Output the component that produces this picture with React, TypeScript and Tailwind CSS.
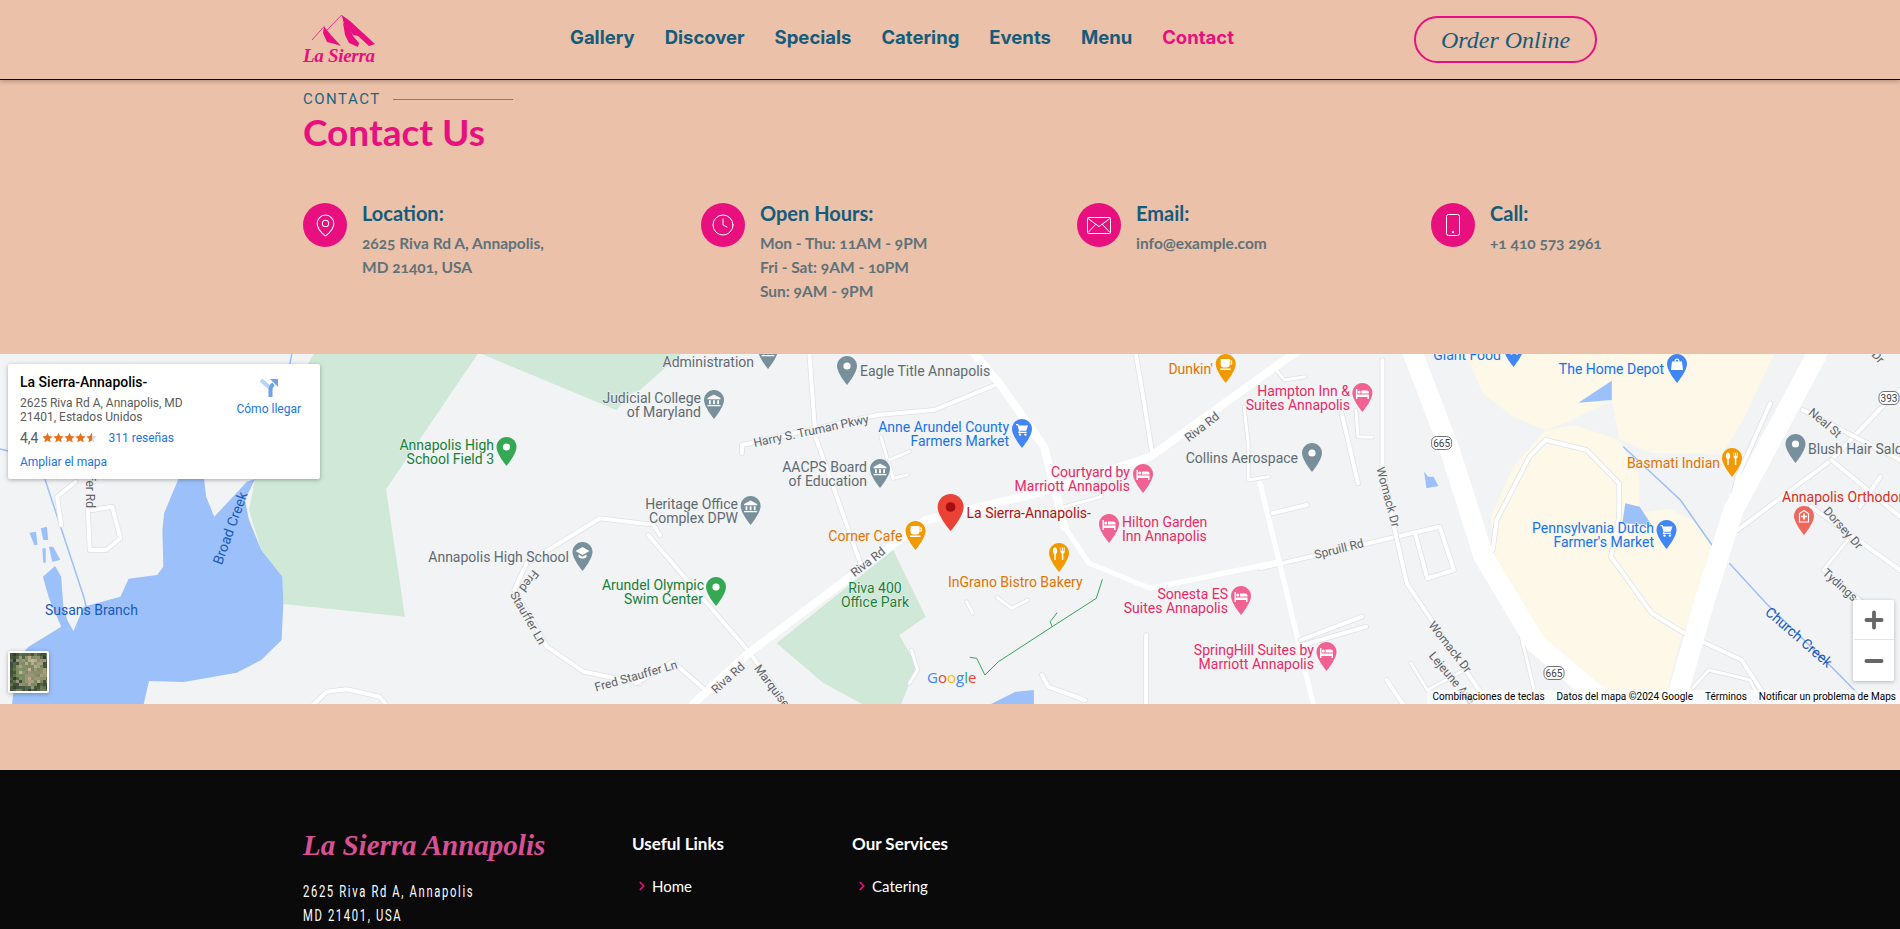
import { ChevronRight, Clock, MapPin, Minus, Plus } from "lucide-react";

const NAV = ["Gallery", "Discover", "Specials", "Catering", "Events", "Menu", "Contact"];

function MailIcon() {
  return (
    <svg width="24" height="17" viewBox="0 0 24 17" fill="none" stroke="#ffffff" strokeWidth="1">
      <rect x="0.500" y="0.500" width="23" height="16" rx="1" />
      <path d="M1 1.500l11 8 11-8M1 15.500l8-8.500M23 15.500l-8-8.500" />
    </svg>
  );
}

function PhoneIcon() {
  return (
    <svg width="14" height="22" viewBox="0 0 14 22" fill="none" stroke="#ffffff" strokeWidth="1">
      <rect x="0.500" y="0.500" width="13" height="21" rx="2" />
      <circle cx="7" cy="18" r="0.800" fill="#ffffff" />
    </svg>
  );
}

const INFO = [
  { title: "Location:", icon: <MapPin size={25} strokeWidth={1} color="#ffffff" />, w: "w-[241px]", lines: ["2625 Riva Rd A, Annapolis,", "MD 21401, USA"] },
  { title: "Open Hours:", icon: <Clock size={24} strokeWidth={1} color="#ffffff" />, w: "w-[219px]", lines: ["Mon - Thu: 11AM - 9PM", "Fri - Sat: 9AM - 10PM", "Sun: 9AM - 9PM"] },
  { title: "Email:", icon: <MailIcon />, w: "w-[197px]", lines: ["info@example.com"] },
  { title: "Call:", icon: <PhoneIcon />, w: "w-[166px]", lines: ["+1 410 573 2961"] },
];

// map points are read off crops that start at y=350, 2.45 crop px per page px across and 3 down
const pts = (x0: number, s: string) =>
  s
    .split(" ")
    .map((p) => {
      const [x, y] = p.split(",").map(Number);
      return `${(x0 + x / 2.45).toFixed(1)},${(350 + y / 3).toFixed(1)}`;
    })
    .join(" ");

const PARKS: [number, string][] = [
  [0, "768,12 1170,12 946,418 992,800 694,762 692,680 640,600 610,480 625,387 640,300"],
  [0, "1180,12 1568,12 1568,100 1510,180"],
  [640, "-60,12 100,12 0,120 -60,150"],
  [640, "620,600 700,800 635,855 680,950 660,1000 640,1062 545,1062 450,1000 335,880"],
];

const SAND: [number, string][] = [
  [1260, "505,12 545,130 620,200 700,240 750,218 862,150 880,268 960,310 1130,312 1180,220 1260,12"],
  [1260, "700,240 770,225 880,270 930,380 930,490 1000,475 1060,510 1110,590 1050,815 1030,870 990,1062 830,1040 680,870 580,640 565,500 620,350"],
];

const WATER: [number, string][] = [
  [0, "437,387 402,490 398,540 400,650 385,675 315,686 295,740 205,770 180,843 165,810 155,770 150,680 135,648 105,680 120,745 150,830 70,890 40,930 30,1062 352,1062 365,993 450,996 580,968 640,930 690,870 694,762 692,680 640,600 610,510 600,450 625,387 605,395 525,500 505,440 500,387"],
  [0, "72,548 88,545 92,585 84,585"],
  [0, "100,535 115,530 118,570 106,570"],
  [0, "104,595 112,595 112,638 106,638"],
  [0, "120,590 130,590 148,630 128,635"],
  [640, "860,1062 920,1025 965,1020 965,1062"],
  [1260, "780,158 862,92 862,150"],
  [1260, "402,365 408,415 437,408 425,380 412,380"],
  [1260, "895,460 888,520 960,525 930,470"],
];

const STREAMS: [number, string][] = [
  [0, "110,387 205,740 215,790"],
  [0, "0,297 20,303"],
  [0, "715,12 710,42"],
  [1260, "890,290 1030,450 1110,590"],
  [1260, "1150,640 1240,760 1400,950 1480,1050"],
];

const ROADS: [number, string, number][] = [
  // small streets first so the big roads run over them
  [1260, "0,655 440,530 475,660 410,685 380,550", 4],
  [640, "250,310 250,285 580,195 720,180 880,100", 4],
  [640, "415,12 430,260 540,640", 4],
  [640, "1215,12 1230,120 1255,310", 4],
  [640, "20,555 270,910 360,1062", 4],
  [0, "1290,640 1470,505 1568,520 1600,523 1617,555", 4],
  [0, "1290,640 1260,720 1340,890 1430,965 1568,1000", 4],
  [640, "-10,1000 80,935 165,1025", 4],
  [0, "770,1062 800,1025 850,1018 930,1040 945,1062", 4],
  [0, "185,395 140,440 150,525", 4],
  [0, "215,480 220,600 260,600 295,565 275,470 225,480", 4],
  [640, "985,975 1000,1010 1090,1050", 4],
  [640, "1240,855 1240,1062", 4],
  [640, "665,900 680,960 660,1000", 3],
  [640, "800,755 815,790", 3],
  [640, "875,742 910,775 950,750", 3],
  [640, "590,260 620,385 655,375", 3],
  [640, "610,330 660,305", 3],
  [640, "1040,470 1130,440 1130,380", 3],
  [640, "1480,170 1490,280 1490,390 1540,380", 3],
  [1260, "200,190 240,400", 4],
  [1260, "0,400 60,700 130,1062", 5],
  [1260, "30,490 115,465", 4],
  [1260, "300,30 300,350 330,540 360,700 420,810 560,1062", 4],
  [1260, "310,990 350,1062", 4],
  [1260, "370,940 410,1020 500,960", 3],
  [1260, "100,870 250,800", 4],
  [1260, "105,885 260,830", 4],
  [1260, "40,60 60,90 110,80", 3],
  [1260, "235,180 240,260 275,262", 3],
  [1260, "570,600 580,510 660,320 700,270 800,300 880,400 880,500 860,620 960,790 1040,850 1180,930 1250,1062", 4],
  [1260, "640,860 680,1062", 3],
  [1260, "1040,1040 1100,960 1200,990 1230,1062", 3],
  [1260, "1250,160 1170,380 1160,430", 4],
  [1260, "1170,540 1400,330 1540,150 1568,120", 4],
  [1260, "1330,180 1568,330", 4],
  [1260, "1400,330 1568,500", 4],
  [1260, "1520,380 1470,470", 4],
  [1260, "1350,470 1568,660", 4],
  [1260, "1440,570 1380,660 1480,760", 3],
  // the same road thins out once it turns into Spruill Rd
  [640, "1040,530 1100,640 1250,715 1568,635", 5],
  // highways and the big roads
  [640, "820,12 880,100 990,290 1040,530", 8],
  [640, "130,1062 265,910 700,510 980,428 1250,320 1568,40 1640,-20", 8],
  [1260, "375,12 465,300 548,620 675,880 810,1020 870,1070", 20],
  [1260, "1365,12 1160,480 1090,750 1015,1070", 20],
];

type Pin = { x: number; top: number; color: string; kind: string };

const SLATE = "#78909c";
const ORANGE = "#f29900";
const ROSE = "#f06292";
const BLUE = "#4285f4";

const PINS: Pin[] = [
  { x: 506.5, top: 437, color: "#34a853", kind: "dot" },
  { x: 582.5, top: 542, color: SLATE, kind: "cap" },
  { x: 714, top: 390, color: SLATE, kind: "bank" },
  { x: 768, top: 340, color: SLATE, kind: "bank" },
  { x: 847, top: 356, color: SLATE, kind: "dot" },
  { x: 1022, top: 419, color: BLUE, kind: "cart" },
  { x: 880, top: 459, color: SLATE, kind: "bank" },
  { x: 750.6, top: 496, color: SLATE, kind: "bank" },
  { x: 915.5, top: 521, color: ORANGE, kind: "cup" },
  { x: 716, top: 577, color: "#34a853", kind: "dot" },
  { x: 1059, top: 543, color: ORANGE, kind: "fork" },
  { x: 1225.7, top: 354, color: ORANGE, kind: "cup" },
  { x: 1143, top: 464, color: ROSE, kind: "bed" },
  { x: 1109, top: 514, color: ROSE, kind: "bed" },
  { x: 1241, top: 586, color: ROSE, kind: "bed" },
  { x: 1326.5, top: 642, color: ROSE, kind: "bed" },
  { x: 1362.4, top: 383, color: ROSE, kind: "bed" },
  { x: 1312, top: 443, color: SLATE, kind: "dot" },
  { x: 1513.5, top: 338, color: BLUE, kind: "cart" },
  { x: 1677, top: 354, color: BLUE, kind: "bag" },
  { x: 1732, top: 448, color: ORANGE, kind: "fork" },
  { x: 1795.5, top: 434, color: SLATE, kind: "dot" },
  { x: 1804, top: 506, color: "#ee675c", kind: "plus" },
  { x: 1666.5, top: 520, color: BLUE, kind: "cart" },
];

const GREEN = "#188038";
const GREY = "#5f6b73";
const AMBER = "#e37400";
const PINK = "#ea2a66";
const SKY = "#1a73e8";
const DEEP = "#185abc";

type Label = { t: string; x: number; cy: number; c: string; a?: "start" | "middle" | "end" };

const LABELS: Label[] = [
  { t: "Annapolis High", x: 494, cy: 445, c: GREEN, a: "end" },
  { t: "School Field 3", x: 494, cy: 459, c: GREEN, a: "end" },
  { t: "Annapolis High School", x: 569, cy: 557, c: GREY, a: "end" },
  { t: "Arundel Olympic", x: 704, cy: 585, c: GREEN, a: "end" },
  { t: "Swim Center", x: 703, cy: 599, c: GREEN, a: "end" },
  { t: "Judicial College", x: 701, cy: 398, c: GREY, a: "end" },
  { t: "of Maryland", x: 701, cy: 412, c: GREY, a: "end" },
  { t: "Administration", x: 754, cy: 362, c: GREY, a: "end" },
  { t: "Eagle Title Annapolis", x: 860, cy: 371, c: GREY },
  { t: "Anne Arundel County", x: 1009, cy: 427, c: SKY, a: "end" },
  { t: "Farmers Market", x: 1009, cy: 441, c: SKY, a: "end" },
  { t: "AACPS Board", x: 867, cy: 467, c: GREY, a: "end" },
  { t: "of Education", x: 867, cy: 481, c: GREY, a: "end" },
  { t: "Heritage Office", x: 738, cy: 504, c: GREY, a: "end" },
  { t: "Complex DPW", x: 738, cy: 518, c: GREY, a: "end" },
  { t: "Corner Cafe", x: 902.4, cy: 536, c: AMBER, a: "end" },
  { t: "La Sierra-Annapolis-", x: 966.5, cy: 513, c: "#b31412" },
  { t: "Riva 400", x: 875, cy: 588, c: GREEN, a: "middle" },
  { t: "Office Park", x: 875, cy: 602, c: GREEN, a: "middle" },
  { t: "InGrano Bistro Bakery", x: 948, cy: 582, c: AMBER },
  { t: "Dunkin'", x: 1213, cy: 369, c: AMBER, a: "end" },
  { t: "Courtyard by", x: 1130, cy: 472, c: PINK, a: "end" },
  { t: "Marriott Annapolis", x: 1130, cy: 486, c: PINK, a: "end" },
  { t: "Hilton Garden", x: 1122, cy: 522, c: PINK },
  { t: "Inn Annapolis", x: 1122, cy: 536, c: PINK },
  { t: "Sonesta ES", x: 1228, cy: 594, c: PINK, a: "end" },
  { t: "Suites Annapolis", x: 1228, cy: 608, c: PINK, a: "end" },
  { t: "SpringHill Suites by", x: 1314, cy: 650, c: PINK, a: "end" },
  { t: "Marriott Annapolis", x: 1314, cy: 664, c: PINK, a: "end" },
  { t: "Hampton Inn &", x: 1350, cy: 391, c: PINK, a: "end" },
  { t: "Suites Annapolis", x: 1350, cy: 405, c: PINK, a: "end" },
  { t: "Collins Aerospace", x: 1298, cy: 458, c: GREY, a: "end" },
  { t: "Giant Food", x: 1501, cy: 355, c: SKY, a: "end" },
  { t: "The Home Depot", x: 1664, cy: 369, c: SKY, a: "end" },
  { t: "Basmati Indian", x: 1720, cy: 463, c: AMBER, a: "end" },
  { t: "Blush Hair Salon", x: 1808, cy: 449, c: GREY },
  { t: "Annapolis Orthodontics", x: 1782, cy: 497, c: "#d93025" },
  { t: "Pennsylvania Dutch", x: 1654, cy: 528, c: SKY, a: "end" },
  { t: "Farmer's Market", x: 1654, cy: 542, c: SKY, a: "end" },
];

const STREETS: { t: string; x: number; y: number; r: number }[] = [
  { t: "Harry S. Truman Pkwy", x: 811, y: 431, r: -12 },
  { t: "Riva Rd", x: 868, y: 562, r: -38 },
  { t: "Riva Rd", x: 728, y: 678, r: -42 },
  { t: "Riva Rd", x: 1202, y: 427, r: -38 },
  { t: "Marquise", x: 772, y: 686, r: 53 },
  { t: "Fred Stauffer Ln", x: 636, y: 676, r: -16 },
  { t: "Fred", x: 529, y: 581, r: 128 },
  { t: "Stauffer Ln", x: 528, y: 618, r: 60 },
  { t: "Spruill Rd", x: 1339, y: 549, r: -14 },
  { t: "Womack Dr", x: 1388, y: 497, r: 75 },
  { t: "Womack Dr", x: 1450, y: 647, r: 52 },
  { t: "Lejeune Ave", x: 1452, y: 678, r: 50 },
  { t: "Neal St", x: 1825, y: 423, r: 40 },
  { t: "Dorsey Dr", x: 1843, y: 528, r: 48 },
  { t: "Tydings", x: 1840, y: 585, r: 42 },
  { t: "Dr", x: 1878, y: 357, r: 50 },
  { t: "Stauffer Rd", x: 90, y: 478, r: 90 },
];

const SHIELDS = [
  { t: "665", x: 1441.6, y: 443 },
  { t: "665", x: 1554, y: 673 },
  { t: "393", x: 1889, y: 398 },
];

const SAT_LIGHT = ["#a89f83", "#b5ab90", "#c0b59a", "#8c8f6c", "#7c8a5f", "#9a9478"];
const SAT_DARK = ["#46563a", "#3f5042", "#54654a", "#5f7048", "#6f7f52", "#2f3f34"];

// aerial speckle for the small satellite button: pale ground in the middle, dark trees round it
const SPECKLE = Array.from({ length: 13 * 13 }, (_, i) => {
  const x = (i % 13) * 3;
  const y = Math.floor(i / 13) * 3;
  const noise = Math.abs(Math.sin(i * 12.9898) * 43758.5453) % 1;
  const pale = Math.hypot(x - 20, y - 17) < 13 + noise * 6;
  const set = pale ? SAT_LIGHT : SAT_DARK;
  return { x, y, c: set[Math.floor(noise * set.length)] };
});

// the white glyph inside a map pin, drawn in the pin's own 20x29 box
function PinGlyph({ kind }: { kind: string }) {
  const white = "#fff";
  switch (kind) {
    case "dot":
      return <circle cx="10" cy="10" r="3.6" fill={white} />;
    case "cap":
      return <path d="M10 5l7 4-7 4-7-4zM6 12.5v2.5c2 2 6 2 8 0v-2.5l-4 2.2z" fill={white} />;
    case "bank":
      return <path d="M10 4.5l6.5 3.5v1.2h-13V8zM5 10.2h1.8v4H5zM9.1 10.2h1.8v4H9.1zM13.2 10.2H15v4h-1.8zM3.5 15h13v1.3h-13z" fill={white} />;
    case "cart":
      return (
        <>
          <path d="M4 5h2.2l.6 1.6H16l-1.8 5.2H8l-.4 1h7v1.2H6l1-2.4L5.4 6.2H4z" fill={white} />
          <circle cx="8" cy="15.6" r="1.2" fill={white} />
          <circle cx="13.4" cy="15.6" r="1.2" fill={white} />
        </>
      );
    case "cup":
      return <path d="M5 5h9v1.4h2.5v4.2H14c0 2-1.2 3-3 3H8c-2 0-3-1.2-3-3zM14 7.6v1.8h1.2V7.6zM4.5 14.6h10.5V16H4.5z" fill={white} />;
    case "fork":
      return <path d="M6 4.5c-1.6 0-2.2 2-2.2 3.5S4.6 11 5.3 11.2V17h1.500v-5.800C7.600 11 8.200 9.500 8.200 8S7.600 4.500 6 4.500zM11.500 4.500v4c0 1 .6 1.800 1.300 2V17h1.500v-6.500c.8-.2 1.400-1 1.400-2v-4h-1v3.500h-.8V4.500h-1V8h-.8V4.500z" fill={white} />;
    case "bed":
      return <path d="M3.500 6h1.400v5.400h11.600V16h-1.400v-2H4.900v2H3.500zM6.800 7.600a1.500 1.500 0 110 3 1.500 1.500 0 010-3zM9 7.500h5.500c1 0 2 .8 2 2v1H9z" fill={white} />;
    case "bag":
      return <path d="M5 7.500h10l1 8.500H4zM7.500 7.500V7a2.500 2.500 0 015 0v.5h-1.200V7a1.300 1.300 0 00-2.600 0v.5z" fill={white} />;
    case "plus":
      return (
        <>
          <path d="M5.500 16V7.500L10 4.500l4.500 3V16z" fill="none" stroke={white} strokeWidth="1.200" />
          <path d="M9.200 7.500h1.600v2.200H13v1.600h-2.200v2.200H9.200v-2.200H7V9.700h2.200z" fill={white} />
        </>
      );
    default:
      return null;
  }
}

function MapLayer() {
  return (
    <svg className="absolute inset-0 h-full w-full" viewBox="0 354 1900 350" style={{ fontFamily: "Roboto, sans-serif" }}>
      {PARKS.map(([x0, s], i) => (
        <polygon key={i} points={pts(x0, s)} fill="#cfe8d7" />
      ))}
      {SAND.map(([x0, s], i) => (
        <polygon key={i} points={pts(x0, s)} fill="#fdf8e7" />
      ))}
      {WATER.map(([x0, s], i) => (
        <polygon key={i} points={pts(x0, s)} fill="#9cc0f9" />
      ))}
      {STREAMS.map(([x0, s], i) => (
        <polyline key={i} points={pts(x0, s)} fill="none" stroke="#9cc0f9" strokeWidth="1.500" />
      ))}
      {ROADS.map(([x0, s, w], i) => (
        <g key={i} fill="none" strokeLinejoin="round" strokeLinecap="round">
          {w < 5 && <polyline points={pts(x0, s)} stroke="#dfe1e5" strokeWidth={w + 1.500} />}
          <polyline points={pts(x0, s)} stroke="#ffffff" strokeWidth={w} />
        </g>
      ))}
      <polyline points={pts(640, "1133,688 1118,745 1010,830 878,935 845,975 825,925 808,922")} fill="none" stroke="#34a853" strokeWidth="1" />
      <polyline points={pts(640, "1010,830 1005,815 1022,788")} fill="none" stroke="#34a853" strokeWidth="1" />

      {SHIELDS.map((s, i) => (
        <g key={i}>
          <rect x={s.x - 10} y={s.y - 6.500} width="20" height="13" rx="5" fill="#fff" stroke="#70757a" strokeWidth="1" />
          <text x={s.x} y={s.y + 3.500} textAnchor="middle" fontSize="10" fill="#3c4043">
            {s.t}
          </text>
        </g>
      ))}

      {STREETS.map((s, i) => (
        <text
          key={i}
          transform={`translate(${s.x} ${s.y}) rotate(${s.r})`}
          textAnchor="middle"
          dominantBaseline="central"
          fontSize="12"
          fill="#5f6368"
          stroke="#f1f3f4"
          strokeWidth="2"
          paintOrder="stroke"
        >
          {s.t}
        </text>
      ))}

      {/* water names sit straight on the blue, no halo */}
      <text x="45" y="615" fontSize="14" fill={DEEP}>
        Susans Branch
      </text>
      <text transform="translate(230 528) rotate(-70)" textAnchor="middle" dominantBaseline="central" fontSize="14" fill={DEEP}>
        Broad Creek
      </text>
      <text transform="translate(1799 637) rotate(41)" textAnchor="middle" dominantBaseline="central" fontSize="14" fill={DEEP}>
        Church Creek
      </text>

      {LABELS.map((l, i) => (
        <text key={i} x={l.x} y={l.cy + 5} textAnchor={l.a ?? "start"} fontSize="14" fill={l.c} stroke="#f1f3f4" strokeWidth="1" paintOrder="stroke">
          {l.t}
        </text>
      ))}

      {PINS.map((p, i) => (
        <g key={i} transform={`translate(${p.x - 10} ${p.top})`}>
          <path d="M10 0C4.500 0 0 4.500 0 10c0 7 10 19 10 19s10-12 10-19C20 4.500 15.500 0 10 0z" fill={p.color} />
          <PinGlyph kind={p.kind} />
        </g>
      ))}

      {/* the red marker of the restaurant */}
      <g transform="translate(937.600 494)">
        <path d="M13 0C5.800 0 0 5.800 0 13c0 9.500 13 24 13 24s13-14.500 13-24C26 5.800 20.200 0 13 0z" fill="#ea4335" />
        <circle cx="13" cy="13" r="4.800" fill="#a50e0e" />
      </g>

      <text x="927" y="683" fontSize="15" fontWeight="500" style={{ fontFamily: "'Open Sans', sans-serif" }}>
        <tspan fill="#4285f4">G</tspan>
        <tspan fill="#ea4335">o</tspan>
        <tspan fill="#fbbc04">o</tspan>
        <tspan fill="#4285f4">g</tspan>
        <tspan fill="#34a853">l</tspan>
        <tspan fill="#ea4335">e</tspan>
      </text>
    </svg>
  );
}

function Stars() {
  return (
    <svg width="56" height="12" viewBox="0 0 56 12">
      <defs>
        <linearGradient id="half">
          <stop offset="50%" stopColor="#e7711b" />
          <stop offset="50%" stopColor="#d9d9d9" />
        </linearGradient>
      </defs>
      {[0, 1, 2, 3, 4].map((i) => (
        <path
          key={i}
          transform={`translate(${i * 11} 0)`}
          d="M5.500 .7l1.500 3.400 3.700.4-2.800 2.400.8 3.600-3.200-1.900-3.200 1.900.8-3.600L.3 4.500 4 4.100z"
          fill={i === 4 ? "url(#half)" : "#e7711b"}
        />
      ))}
    </svg>
  );
}

function PlaceCard() {
  return (
    <div className="absolute left-2 top-[10px] flex h-[115px] w-[312px] justify-between rounded-[2px] bg-white px-3 pt-[9px] font-['Roboto',sans-serif] shadow-[0_1px_4px_rgba(0,0,0,0.3)]">
      <div>
        <div className="text-[14px] leading-[18px] font-medium text-black">La Sierra-Annapolis-</div>
        <div className="mt-[5px] w-[190px] text-[12px] leading-[14px] text-[#5b5b5b]">2625 Riva Rd A, Annapolis, MD 21401, Estados Unidos</div>
        <div className="mt-[5px] flex h-[18px] items-center text-[12px]">
          <span className="mr-[3px] text-[14px] text-[#5b5b5b]">4,4</span>
          <Stars />
          <span className="ml-[11px] text-[#1a73e8]">311 reseñas</span>
        </div>
        <div className="mt-[8px] text-[12px] leading-[14px] text-[#1a73e8]">Ampliar el mapa</div>
      </div>
      <div className="mr-[7px] flex flex-col items-center pt-[5px]">
        <svg width="20" height="20" viewBox="0 0 20 20">
          <path d="M2 2l9 8" stroke="#b8d3f5" strokeWidth="4" fill="none" />
          <path d="M11.500 19v-7c0-3 1-4.500 3-6" stroke="#6ea3ea" strokeWidth="4" fill="none" />
          <path d="M11 1h8v8z" fill="#6ea3ea" />
        </svg>
        <span className="mt-[3px] text-[12px] leading-[16px] text-[#1a73e8]">Cómo llegar</span>
      </div>
    </div>
  );
}

function MapSection() {
  return (
    <div className="relative h-[350px] overflow-hidden bg-[#f1f3f4]">
      <MapLayer />
      <PlaceCard />

      {/* satellite thumbnail */}
      <div className="absolute bottom-[11px] left-[8px] h-[42px] w-[41px] overflow-hidden rounded-[2px] border-2 border-white shadow-[0_1px_4px_rgba(0,0,0,0.3)]">
        <svg width="37" height="38" viewBox="0 0 37 38">
          {SPECKLE.map((s, i) => (
            <rect key={i} x={s.x} y={s.y} width="3" height="3" fill={s.c} />
          ))}
        </svg>
      </div>

      {/* zoom buttons */}
      <div className="absolute right-[6px] top-[246px] flex h-[81px] w-[41px] flex-col items-center rounded-[2px] bg-white shadow-[0_1px_4px_rgba(0,0,0,0.25)]">
        <div className="flex h-[40px] items-center justify-center border-b border-[#e6e6e6] px-[6px]">
          <Plus size={26} strokeWidth={3.500} color="#666666" className="mx-[1px]" />
        </div>
        <div className="flex h-[41px] items-center justify-center">
          <Minus size={26} strokeWidth={3.500} color="#666666" />
        </div>
      </div>

      {/* attribution strip */}
      <div className="absolute bottom-0 right-0 flex h-[14px] items-center gap-[12px] bg-white/60 pl-[5px] pr-[4px] font-['Roboto',sans-serif] text-[10px] leading-[14px] text-black">
        <span>Combinaciones de teclas</span>
        <span>Datos del mapa ©2024 Google</span>
        <span>Términos</span>
        <span>Notificar un problema de Maps</span>
      </div>
    </div>
  );
}

export default function App() {
  return (
    <div className="h-screen overflow-hidden bg-[#ebc1a9]">
      {/* Header */}
      <header className="h-[80px] border-b border-black shadow-[0_2px_4px_rgba(0,0,0,0.2)]">
        <div className="mx-auto flex h-[79px] w-[1294px] items-center">
          <svg width="72" height="50" viewBox="0 0 72 50" className="shrink-0 overflow-visible">
            <path d="M9 25L21 11.500M24 15L38.700 0" stroke="#e8107f" strokeWidth="0.800" fill="none" />
            <path d="M21 11.500L28 20L38 31L32 29L24 27L20 18z" fill="#e8107f" />
            <path d="M38.700 0L47 6L72 29L66 31L55 21L50 20L46 13L41 9z" fill="#e8107f" />
            <path d="M40 8L47 13L50 21L56 28L55 32L46 28L42 20z" fill="#e8107f" />
            <text x="0" y="47" fontSize="19" fontStyle="italic" fontWeight="700" fill="#e8107f" fontFamily="'Liberation Serif', serif" textLength="72">
              La Sierra
            </text>
          </svg>
          <nav className="ml-[195px] flex gap-[30px] pb-[3px] font-['Inter',sans-serif] text-[18.500px] font-bold text-[#155b7b]">
            {NAV.map((item) => (
              <a key={item} href="#" className={item === "Contact" ? "text-[#e8107f]" : ""}>
                {item}
              </a>
            ))}
          </nav>
          <a
            href="#"
            className="ml-auto flex h-[47px] w-[183px] items-center justify-center rounded-full border-2 border-[#e8107f] font-['Liberation_Serif',serif] text-[24px] italic text-[#155b7b]"
          >
            Order Online
          </a>
        </div>
      </header>

      {/* Contact info */}
      <section className="mx-auto h-[274px] w-[1294px] pt-[10px] font-['Lato',sans-serif]">
        <div className="flex items-center font-['Roboto',sans-serif] text-[15px] leading-[18px] tracking-[1.5px] text-[#1d6583]">
          CONTACT
          <span className="ml-[12px] h-px w-[120px] bg-[#5c8a9a]" />
        </div>
        <h1 className="mt-[2px] text-[37px] leading-[44px] font-bold text-[#e8107f]">Contact Us</h1>
        <div className="mt-[49px] flex justify-between">
          {INFO.map(({ title, icon, w, lines }) => (
            <div key={title} className={`flex ${w}`}>
              <div className="flex h-[44px] w-[44px] shrink-0 items-center justify-center rounded-full bg-[#e8107f]">{icon}</div>
              <div className="ml-[15px] -mt-[2px]">
                <h3 className="text-[20px] leading-[24px] font-bold text-[#155b7b]">{title}</h3>
                <div className="mt-[6px] whitespace-nowrap text-[15.500px] leading-[24px] font-bold text-[#5f7279] oldstyle-nums">
                  {lines.map((line) => (
                    <div key={line}>{line}</div>
                  ))}
                </div>
              </div>
            </div>
          ))}
        </div>
      </section>

      <MapSection />

      <div className="h-[66px]" />

      {/* Footer */}
      <footer className="h-[159px] bg-[#0b0a0a] text-white">
        <div className="mx-auto flex w-[1294px] pt-[57px]">
          <div className="w-[329px]">
            <div className="font-['Liberation_Serif',serif] text-[29px] leading-[36px] font-bold italic text-[#d94f94]">La Sierra Annapolis</div>
            <div className="mt-[16px] origin-left scale-x-[0.66] whitespace-nowrap font-['Roboto',sans-serif] text-[17px] leading-[24px] tracking-[2.5px]">
              <div>2625 Riva Rd A, Annapolis</div>
              <div>MD 21401, USA</div>
            </div>
          </div>
          <div className="w-[220px] pt-[5px] font-['Lato',sans-serif]">
            <h4 className="text-[17px] leading-[24px] font-bold">Useful Links</h4>
            <div className="mt-[18px] flex items-center pl-[3px] text-[15px] leading-[24px]">
              <ChevronRight size={14} strokeWidth={3} color="#e8107f" className="mr-[3px]" />
              Home
            </div>
          </div>
          <div className="pt-[5px] font-['Lato',sans-serif]">
            <h4 className="text-[17px] leading-[24px] font-bold">Our Services</h4>
            <div className="mt-[18px] flex items-center pl-[3px] text-[15px] leading-[24px]">
              <ChevronRight size={14} strokeWidth={3} color="#e8107f" className="mr-[3px]" />
              Catering
            </div>
          </div>
        </div>
      </footer>
    </div>
  );
}
